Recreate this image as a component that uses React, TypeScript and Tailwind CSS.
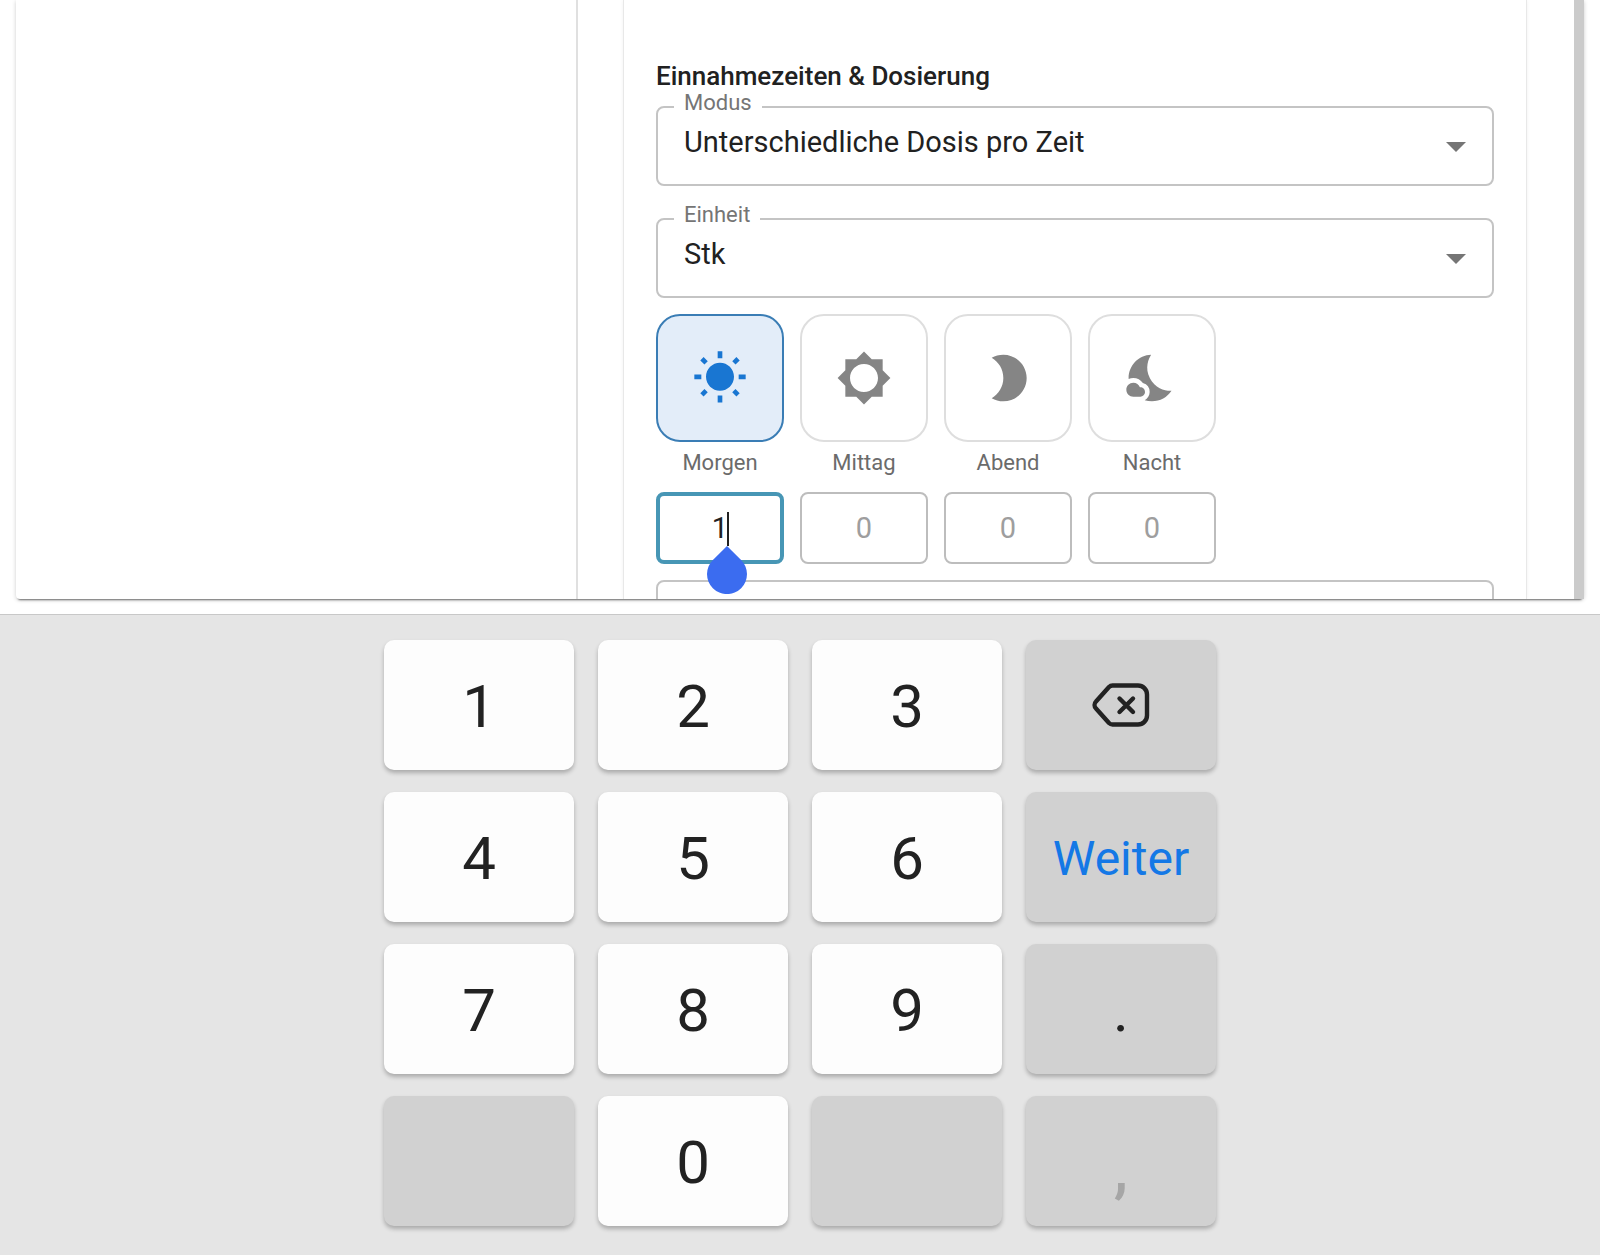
import React, { useState } from 'react';
import { MdBrightness2, MdBrightness5, MdNightsStay, MdWbSunny } from 'react-icons/md';

interface SelectFieldProps {
  id: string;
  label: string;
  value: string;
  options: string[];
  onChange: (value: string) => void;
}

const SelectField: React.FC<SelectFieldProps> = ({ id, label, value, options, onChange }) => (
  <div className="relative">
    <label
      htmlFor={id}
      className="absolute left-[18px] -top-3 bg-white px-[10px] text-[22px] leading-[18px] text-[#757575]"
    >
      {label}
    </label>
    <select
      id={id}
      value={value}
      onChange={(e) => onChange(e.target.value)}
      className="block h-20 w-full appearance-none rounded-lg border-2 border-[#c4c4c4] bg-transparent pb-[6px] pl-[26px] pr-16 text-[29px] text-[#212121] outline-none"
    >
      {options.map((option) => (
        <option key={option} value={option}>
          {option}
        </option>
      ))}
    </select>
    <svg
      className="pointer-events-none absolute right-7 top-9 h-[10px] w-5"
      viewBox="0 0 20 10"
      fill="#757575"
    >
      <path d="M0 0h20L10 10z" />
    </svg>
  </div>
);

const times = [
  { id: 'morgen', label: 'Morgen', Icon: MdWbSunny },
  { id: 'mittag', label: 'Mittag', Icon: MdBrightness5 },
  { id: 'abend', label: 'Abend', Icon: MdBrightness2 },
  { id: 'nacht', label: 'Nacht', Icon: MdNightsStay },
];

const BackspaceIcon = () => (
  <svg
    width="58"
    height="44"
    viewBox="0 0 58 44"
    fill="none"
    stroke="#222"
    strokeWidth="4.4"
    strokeLinecap="round"
    strokeLinejoin="round"
  >
    <path d="M20.5 2.5H46a9 9 0 0 1 9 9v21a9 9 0 0 1-9 9H20.5c-1.5 0-2.5-.5-3.5-1.5L4 25.5a5 5 0 0 1 0-7L17 4c1-1 2-1.5 3.5-1.5z" />
    <path d="M27.5 15.5L41 29M41 15.5L27.5 29" />
  </svg>
);

interface Key {
  id: string;
  label?: React.ReactNode;
  name?: string;
  className: string;
}

const light = 'bg-[#fdfdfd] pt-1 text-[60px] text-[#222]';
const dark = 'bg-[#d1d1d1] text-[60px] text-[#222]';

const keys: Key[] = [
  { id: '1', label: '1', className: light },
  { id: '2', label: '2', className: light },
  { id: '3', label: '3', className: light },
  { id: 'back', label: <BackspaceIcon />, name: 'Löschen', className: dark },
  { id: '4', label: '4', className: light },
  { id: '5', label: '5', className: light },
  { id: '6', label: '6', className: light },
  { id: 'next', label: 'Weiter', className: 'bg-[#d1d1d1] pt-1 text-[48px] text-[#1478e6]' },
  { id: '7', label: '7', className: light },
  { id: '8', label: '8', className: light },
  { id: '9', label: '9', className: light },
  { id: 'dot', label: '.', className: 'bg-[#d1d1d1] pt-1 text-[60px] text-[#222]' },
  { id: 'blank-left', className: dark },
  { id: '0', label: '0', className: light },
  { id: 'blank-right', className: dark },
  {
    id: 'comma',
    label: ',',
    className: 'bg-[#d1d1d1] pt-4 text-[64px] font-medium text-[#a6a6a6]',
  },
];

export default function App() {
  const [mode, setMode] = useState('Unterschiedliche Dosis pro Zeit');
  const [unit, setUnit] = useState('Stk');
  const [doses, setDoses] = useState<Record<string, string>>({ morgen: '1' });

  const setDose = (id: string, value: string) => setDoses({ ...doses, [id]: value });

  return (
    <div className="flex h-screen flex-col bg-white font-['Roboto',sans-serif]">
      {/* Dialog */}
      <div className="flex min-h-0 flex-1 overflow-hidden px-4 pb-[15px]">
        <div className="flex min-w-0 flex-1 rounded-b-sm shadow-[0_3px_2px_-2px_rgba(0,0,0,0.5),0_1px_4px_rgba(0,0,0,0.2)]">
          <div className="w-[562px] shrink-0 border-r-2 border-[#e0e0e0]" />
          <main className="flex min-w-0 flex-1 overflow-hidden pl-[45px] pr-[47px]">
            <section className="min-w-0 flex-1 border-x border-[#e8e8e8] px-8 pt-[62px] shadow-[0_0_4px_rgba(0,0,0,0.06)]">
              <h2 className="text-[26px] font-medium leading-7 text-[#212121]">
                Einnahmezeiten &amp; Dosierung
              </h2>
              <div className="mt-4 flex flex-col gap-8">
                <SelectField
                  id="mode"
                  label="Modus"
                  value={mode}
                  options={['Unterschiedliche Dosis pro Zeit', 'Gleiche Dosis']}
                  onChange={setMode}
                />
                <SelectField
                  id="unit"
                  label="Einheit"
                  value={unit}
                  options={['Stk', 'ml']}
                  onChange={setUnit}
                />
              </div>

              {/* Times of day */}
              <div className="mt-4 flex gap-4">
                {times.map(({ id, label, Icon }) => {
                  const active = Boolean(doses[id]);
                  return (
                    <div key={id} className="flex w-32 flex-col items-center">
                      <button
                        type="button"
                        aria-label={label}
                        aria-pressed={active}
                        onClick={() => setDose(id, active ? '' : '1')}
                        className={`flex h-32 w-full items-center justify-center rounded-3xl border-2 ${
                          active
                            ? 'border-[#3a7db5] bg-[#e3edf9] text-[#1976d2]'
                            : 'border-[#dedede] bg-white text-[#858585]'
                        }`}
                      >
                        <Icon size={56} />
                      </button>
                      <label
                        htmlFor={`dose-${id}`}
                        className="mt-[6px] text-[22px] leading-[30px] text-[#6b6b6b]"
                      >
                        {label}
                      </label>
                      <div className="relative mt-[14px] w-full">
                        <input
                          id={`dose-${id}`}
                          inputMode="decimal"
                          placeholder="0"
                          value={doses[id] ?? ''}
                          onChange={(e) => setDose(id, e.target.value)}
                          className={`block h-[72px] w-full rounded-lg text-center text-[29px] text-[#212121] outline-none placeholder:text-[#9e9e9e] ${
                            active ? 'border-4 border-[#4796b5]' : 'border-2 border-[#bdbdbd]'
                          }`}
                        />
                        {/* Caret and its drag handle */}
                        {id === 'morgen' && (
                          <>
                            <span className="absolute left-[71px] top-5 h-[34px] w-[2px] bg-[#212121]" />
                            <svg
                              className="absolute left-[51px] top-[54px] z-10"
                              width="40"
                              height="48"
                              viewBox="0 0 40 48"
                              fill="#3b6cf0"
                            >
                              <path d="M20 0L34.1 13.9A20 20 0 1 1 5.9 13.9z" />
                            </svg>
                          </>
                        )}
                      </div>
                    </div>
                  );
                })}
              </div>

              <div className="mt-4 h-20 rounded-lg border-2 border-[#c4c4c4]" />
            </section>
          </main>
          <div className="w-[10px] shrink-0 bg-[#cbcbcb]" />
        </div>
      </div>

      {/* Number pad */}
      <div className="border-t border-[#c8c8c8] bg-[#e5e5e5] pb-[29px] pt-[25px]">
        <div className="mx-auto grid max-w-[832px] grid-cols-4 gap-x-6 gap-y-[22px]">
          {keys.map((key) => (
            <button
              key={key.id}
              type="button"
              aria-label={key.name}
              className={`flex h-[130px] items-center justify-center rounded-[10px] leading-none shadow-[0_3px_4px_rgba(0,0,0,0.25)] ${key.className}`}
            >
              {key.label}
            </button>
          ))}
        </div>
      </div>
    </div>
  );
}
